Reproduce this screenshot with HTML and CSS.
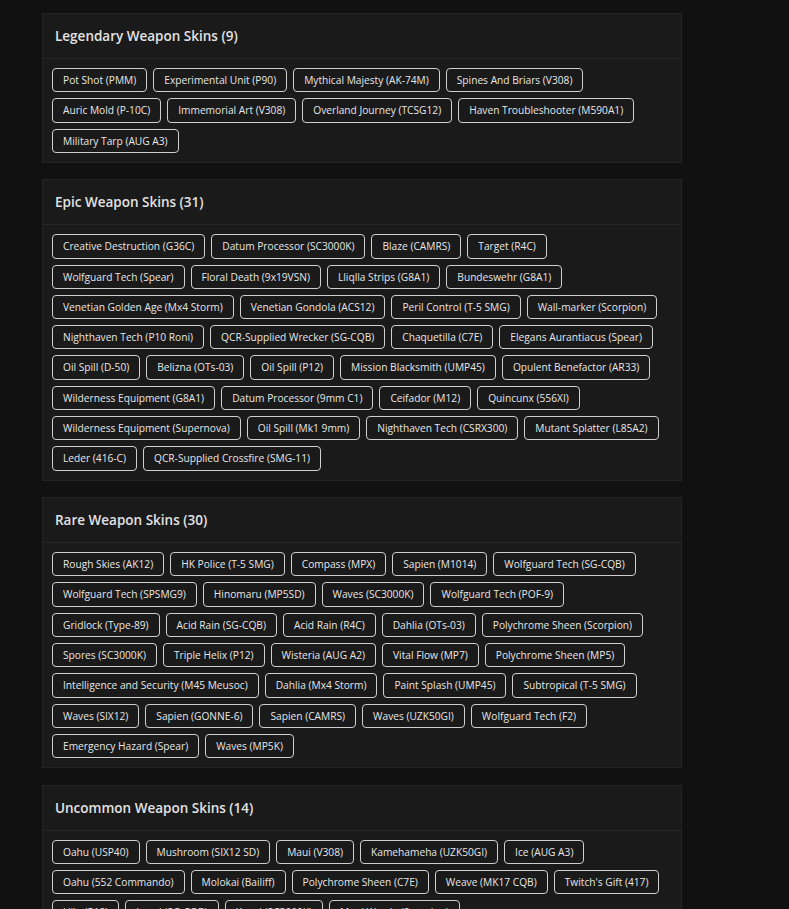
FILE: index.html
```html
<!DOCTYPE html>
<html lang="en">
<head>
    <meta charset="UTF-8">
    <meta name="viewport" content="width=device-width, initial-scale=1.0">
    <title>Weapon Skins</title>
    <link rel="stylesheet" href="styles.css">
</head>
<body>
    <div class="container">
        <div class="card">
            <h2 class="card-title">Legendary Weapon Skins (9)</h2>
            <div class="skin-list">
                <span class="skin">Pot Shot (PMM)</span>
                <span class="skin">Experimental Unit (P90)</span>
                <span class="skin">Mythical Majesty (AK-74M)</span>
                <span class="skin">Spines And Briars (V308)</span>
                <span class="skin">Auric Mold (P-10C)</span>
                <span class="skin">Immemorial Art (V308)</span>
                <span class="skin">Overland Journey (TCSG12)</span>
                <span class="skin">Haven Troubleshooter (M590A1)</span>
                <span class="skin">Military Tarp (AUG A3)</span>
            </div>
        </div>

        <div class="card">
            <h2 class="card-title">Epic Weapon Skins (31)</h2>
            <div class="skin-list">
                <span class="skin">Creative Destruction (G36C)</span>
                <span class="skin">Datum Processor (SC3000K)</span>
                <span class="skin">Blaze (CAMRS)</span>
                <span class="skin">Target (R4C)</span>
                <span class="skin">Wolfguard Tech (Spear)</span>
                <span class="skin">Floral Death (9x19VSN)</span>
                <span class="skin">Lliqlla Strips (G8A1)</span>
                <span class="skin">Bundeswehr (G8A1)</span>
                <span class="skin">Venetian Golden Age (Mx4 Storm)</span>
                <span class="skin">Venetian Gondola (ACS12)</span>
                <span class="skin">Peril Control (T-5 SMG)</span>
                <span class="skin">Wall-marker (Scorpion)</span>
                <span class="skin">Nighthaven Tech (P10 Roni)</span>
                <span class="skin">QCR-Supplied Wrecker (SG-CQB)</span>
                <span class="skin">Chaquetilla (C7E)</span>
                <span class="skin">Elegans Aurantiacus (Spear)</span>
                <span class="skin">Oil Spill (D-50)</span>
                <span class="skin">Belizna (OTs-03)</span>
                <span class="skin">Oil Spill (P12)</span>
                <span class="skin">Mission Blacksmith (UMP45)</span>
                <span class="skin">Opulent Benefactor (AR33)</span>
                <span class="skin">Wilderness Equipment (G8A1)</span>
                <span class="skin">Datum Processor (9mm C1)</span>
                <span class="skin">Ceifador (M12)</span>
                <span class="skin">Quincunx (556XI)</span>
                <span class="skin">Wilderness Equipment (Supernova)</span>
                <span class="skin">Oil Spill (Mk1 9mm)</span>
                <span class="skin">Nighthaven Tech (CSRX300)</span>
                <span class="skin">Mutant Splatter (L85A2)</span>
                <span class="skin">Leder (416-C)</span>
                <span class="skin">QCR-Supplied Crossfire (SMG-11)</span>
            </div>
        </div>

        <div class="card">
            <h2 class="card-title">Rare Weapon Skins (30)</h2>
            <div class="skin-list">
                <span class="skin">Rough Skies (AK12)</span>
                <span class="skin">HK Police (T-5 SMG)</span>
                <span class="skin">Compass (MPX)</span>
                <span class="skin">Sapien (M1014)</span>
                <span class="skin">Wolfguard Tech (SG-CQB)</span>
                <span class="skin">Wolfguard Tech (SPSMG9)</span>
                <span class="skin">Hinomaru (MP5SD)</span>
                <span class="skin">Waves (SC3000K)</span>
                <span class="skin">Wolfguard Tech (POF-9)</span>
                <span class="skin">Gridlock (Type-89)</span>
                <span class="skin">Acid Rain (SG-CQB)</span>
                <span class="skin">Acid Rain (R4C)</span>
                <span class="skin">Dahlia (OTs-03)</span>
                <span class="skin">Polychrome Sheen (Scorpion)</span>
                <span class="skin">Spores (SC3000K)</span>
                <span class="skin">Triple Helix (P12)</span>
                <span class="skin">Wisteria (AUG A2)</span>
                <span class="skin">Vital Flow (MP7)</span>
                <span class="skin">Polychrome Sheen (MP5)</span>
                <span class="skin">Intelligence and Security (M45 Meusoc)</span>
                <span class="skin">Dahlia (Mx4 Storm)</span>
                <span class="skin">Paint Splash (UMP45)</span>
                <span class="skin">Subtropical (T-5 SMG)</span>
                <span class="skin">Waves (SIX12)</span>
                <span class="skin">Sapien (GONNE-6)</span>
                <span class="skin">Sapien (CAMRS)</span>
                <span class="skin">Waves (UZK50GI)</span>
                <span class="skin">Wolfguard Tech (F2)</span>
                <span class="skin">Emergency Hazard (Spear)</span>
                <span class="skin">Waves (MP5K)</span>
            </div>
        </div>

        <div class="card">
            <h2 class="card-title">Uncommon Weapon Skins (14)</h2>
            <div class="skin-list">
                <span class="skin">Oahu (USP40)</span>
                <span class="skin">Mushroom (SIX12 SD)</span>
                <span class="skin">Maui (V308)</span>
                <span class="skin">Kamehameha (UZK50GI)</span>
                <span class="skin">Ice (AUG A3)</span>
                <span class="skin">Oahu (552 Commando)</span>
                <span class="skin">Molokai (Bailiff)</span>
                <span class="skin">Polychrome Sheen (C7E)</span>
                <span class="skin">Weave (MK17 CQB)</span>
                <span class="skin">Twitch's Gift (417)</span>
                <span class="skin">Hilo (P12)</span>
                <span class="skin">Lanai (SG-CQB)</span>
                <span class="skin">Kauai (SC3000K)</span>
                <span class="skin">Maui Wowie (Scorpion)</span>
            </div>
        </div>
    </div>
</body>
</html>
```

FILE: styles.css
```css
body {
    margin: 0;
    background-color: #111111;
    font-family: "Open Sans", "Liberation Sans", sans-serif;
    color: #e4e4e4;
}
.container {
    width: 640px;
    padding: 13px 0 40px 42px;
    display: flex;
    flex-direction: column;
    gap: 16.4px;
}
.card {
    background-color: #1a1a1a;
    border: 1px solid #242424;
}
.card-title {
    margin: 0;
    height: 44px;
    line-height: 44px;
    padding: 0 12px;
    font-size: 13.5px;
    font-weight: 600;
    color: #e2e2e2;
    border-bottom: 1px solid #262626;
}
.skin-list {
    display: flex;
    flex-wrap: wrap;
    gap: 6px;
    padding: 9px;
}
.skin {
    display: inline-block;
    border: 1px solid #cfcfcf;
    border-radius: 4px;
    padding: 0 10px;
    line-height: 22.3px;
    font-size: 10.2px;
    color: #e6e6e6;
    white-space: nowrap;
}
```
